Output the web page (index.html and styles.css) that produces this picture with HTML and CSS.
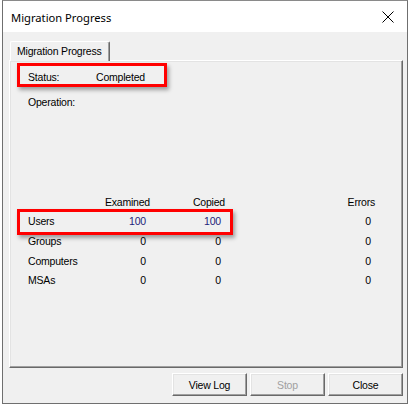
FILE: index.html
```html
<!DOCTYPE html>
<html lang="en">
<head>
  <meta charset="UTF-8">
  <title>Migration Progress</title>
  <link rel="stylesheet" href="styles.css">
</head>
<body>

  <div class="window">
    <div class="title-bar">
      <span class="title-text">Migration Progress</span>
      <svg class="close-x" width="12" height="12" viewBox="0 0 12 12">
        <path d="M0.5 0.5 L11.5 11.5 M11.5 0.5 L0.5 11.5" stroke="#000" stroke-width="1" fill="none"/>
      </svg>
    </div>

    <div class="client">
      <div class="tabs">
        <div class="tab">Migration Progress</div>
      </div>

      <div class="panel">
        <div class="info-row">
          <span class="info-label">Status:</span>
          <span class="info-value">Completed</span>
        </div>
        <div class="info-row">
          <span class="info-label">Operation:</span>
          <span class="info-value"></span>
        </div>

        <div class="counts">
          <span></span>
          <span class="head">Examined</span>
          <span class="head">Copied</span>
          <span class="head">Errors</span>

          <span class="name">Users</span>
          <span class="num blue">100</span>
          <span class="num blue">100</span>
          <span class="num">0</span>

          <span class="name">Groups</span>
          <span class="num">0</span>
          <span class="num">0</span>
          <span class="num">0</span>

          <span class="name">Computers</span>
          <span class="num">0</span>
          <span class="num">0</span>
          <span class="num">0</span>

          <span class="name">MSAs</span>
          <span class="num">0</span>
          <span class="num">0</span>
          <span class="num">0</span>
        </div>

        <!-- red annotation boxes -->
        <div class="mark mark-status"></div>
        <div class="mark mark-users"></div>
      </div>

      <div class="buttons">
        <button class="btn">View Log</button>
        <button class="btn" disabled>Stop</button>
        <button class="btn">Close</button>
      </div>
    </div>
  </div>

</body>
</html>
```

FILE: styles.css
```css
* {
  box-sizing: border-box;
}

body {
  margin: 0;
  background: #ffffff;
  font-family: "Liberation Sans", Arial, sans-serif;
  font-size: 10.5px;
  letter-spacing: -0.2px;
  color: #000;
}

.window {
  margin-left: 2px;
  width: 406px;
  height: 404px;
  border: 1px solid #6f6f6f;
  border-top-color: #8a8a8a;
  background: #f0f0f0;
  display: flex;
  flex-direction: column;
}

.title-bar {
  height: 31px;
  flex-shrink: 0;
  background: #ffffff;
  display: flex;
  align-items: center;
  justify-content: space-between;
  padding: 0 13px 0 8px;
}

.title-text {
  font-family: "Noto Sans", "Open Sans", sans-serif;
  font-size: 11.2px;
  letter-spacing: 0;
  color: #000;
  padding-top: 2px;
}

.close-x {
  display: block;
}

.client {
  flex: 1;
  display: flex;
  flex-direction: column;
  padding: 9px 4px 0 6px;
}

.tabs {
  display: flex;
  padding-left: 1px;
}

.tab {
  height: 20px;
  line-height: 19px;
  padding: 0 7px 0 6px;
  border: 1px solid #ffffff;
  border-right-color: #696969;
  border-bottom: none;
  border-top-left-radius: 2px;
  border-top-right-radius: 2px;
  box-shadow: inset -1px 0 #a0a0a0;
  margin-bottom: -1px;
  background: #f0f0f0;
  position: relative;
  z-index: 1;
}

.panel {
  position: relative;
  height: 308px;
  border: 1px solid #ffffff;
  border-right-color: #696969;
  border-bottom-color: #696969;
  box-shadow: inset -1px -1px #a0a0a0, inset 1px 1px #e3e3e3;
  padding: 10px 0 0 18px;
}

.info-row {
  display: flex;
  height: 13px;
  line-height: 13px;
  margin-bottom: 12px;
}

.info-label {
  width: 68px;
}

.counts {
  display: grid;
  grid-template-columns: 72px 46px 75px 150px;
  grid-auto-rows: 19.6px;
  align-items: center;
  margin-top: 83px;
}

.counts .head {
  text-align: right;
  margin-right: -4px;
}

.counts .num {
  text-align: right;
}

.counts .blue {
  color: #1e1e7a;
}

.mark {
  position: absolute;
  border: 3px solid #ff0000;
  box-shadow: 2px 3px 4px rgba(0, 0, 0, 0.35);
}

.mark-status {
  left: 7px;
  top: 2px;
  width: 150px;
  height: 24px;
}

.mark-users {
  left: 7px;
  top: 148px;
  width: 216px;
  height: 26px;
}

.buttons {
  display: flex;
  justify-content: flex-end;
  gap: 3px;
  padding: 5px 0 0 0;
}

.btn {
  width: 75px;
  height: 23px;
  font-family: "Liberation Sans", Arial, sans-serif;
  font-size: 10.5px;
  letter-spacing: -0.2px;
  color: #000;
  background: #f0f0f0;
  border: 1px solid #ffffff;
  border-right-color: #696969;
  border-bottom-color: #696969;
  box-shadow: inset -1px -1px #a0a0a0, inset 1px 1px #e3e3e3;
  padding: 0;
}

.btn:disabled {
  color: #a0a0a0;
}
```
